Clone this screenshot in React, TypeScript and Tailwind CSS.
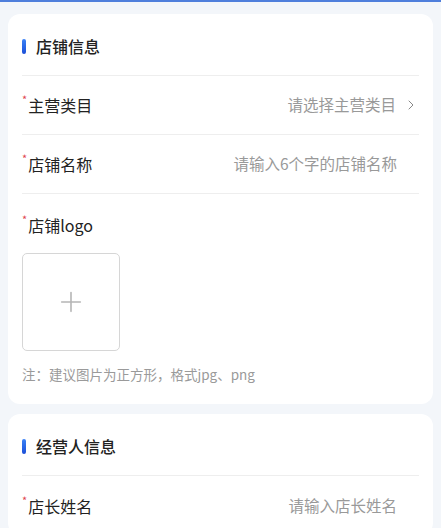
import { ChevronRight, Plus } from "lucide-react";

const font = { fontFamily: '"Noto Sans CJK SC", "Noto Sans", sans-serif' };

function SectionTitle({ title }: { title: string }) {
  return (
    <div className="flex h-[62px] items-center gap-[10px] border-b border-[#eeeeee] pt-[3px]">
      <span className="h-[15px] w-[4px] rounded-full bg-gradient-to-b from-[#3b82f6] to-[#1d4ed8]" />
      <span className="text-[16px] font-medium text-[#222]">{title}</span>
    </div>
  );
}

function Label({ text }: { text: string }) {
  return (
    <span className="flex items-start text-[16px] text-[#222]">
      <span className="mr-[1px] mt-[1px] text-[11px] leading-none text-[#e0454f]">*</span>
      {text}
    </span>
  );
}

function Row({ label, placeholder, arrow, last }: { label: string; placeholder: string; arrow?: boolean; last?: boolean }) {
  return (
    <div className={`flex h-[59px] items-center justify-between ${last ? "" : "border-b border-[#eeeeee]"}`}>
      <Label text={label} />
      <div className="flex items-center gap-[7px] text-[15.5px] text-[#999]">
        <span className={arrow ? "" : "mr-[22px]"}>{placeholder}</span>
        {arrow && <ChevronRight size={16} strokeWidth={1.5} className="text-[#888]" />}
      </div>
    </div>
  );
}

export default function App() {
  return (
    <div className="min-h-[528px] bg-[#f3f6fa]" style={font}>
      <div className="h-[2px] bg-[#4f7fdc]" />
      <div className="flex flex-col gap-[10px] px-[8px] pt-[12px]">
        <section className="rounded-[12px] bg-white px-[14px] pb-[20px]">
          <SectionTitle title="店铺信息" />
          <Row label="主营类目" placeholder="请选择主营类目" arrow />
          <Row label="店铺名称" placeholder="请输入6个字的店铺名称" />
          <div className="pt-[19px]">
            <Label text="店铺logo" />
            <div className="mt-[16px] flex h-[98px] w-[98px] items-center justify-center rounded-[5px] border border-[#d6d6d6]">
              <Plus size={32} strokeWidth={1.2} className="text-[#b5b5b5]" />
            </div>
            <p className="mt-[13px] text-[13.5px] text-[#9a9a9a]">注：建议图片为正方形，格式jpg、png</p>
          </div>
        </section>
        <section className="rounded-[12px] bg-white px-[14px]">
          <SectionTitle title="经营人信息" />
          <Row label="店长姓名" placeholder="请输入店长姓名" last />
        </section>
      </div>
    </div>
  );
}
